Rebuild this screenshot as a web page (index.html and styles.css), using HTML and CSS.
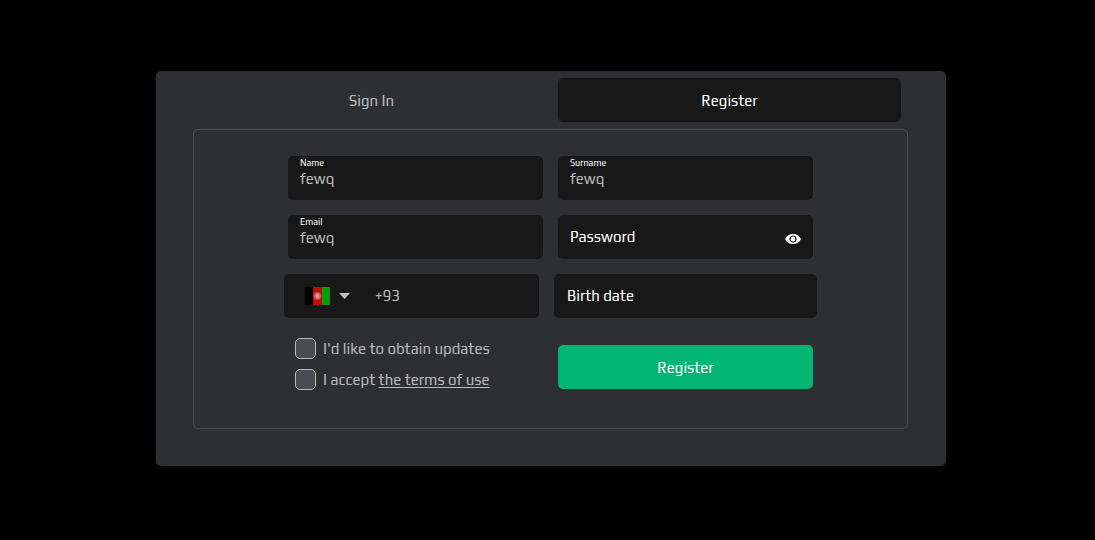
FILE: index.html
```html
<!DOCTYPE html>
<html lang="en">
<head>
<meta charset="utf-8">
<meta name="viewport" content="width=device-width, initial-scale=1">
<title>Register</title>
<link rel="stylesheet" href="styles.css">
</head>
<body>
<main class="card">
  <nav class="tabs">
    <button class="tab" type="button">Sign In</button>
    <button class="tab tab-active" type="button">Register</button>
  </nav>
  <section class="panel">
    <form class="form">
      <div class="row">
        <div class="field">
          <label class="field-label" for="name">Name</label>
          <input class="field-input" id="name" type="text" value="fewq">
        </div>
        <div class="field">
          <label class="field-label" for="surname">Surname</label>
          <input class="field-input" id="surname" type="text" value="fewq">
        </div>
      </div>
      <div class="row">
        <div class="field">
          <label class="field-label" for="email">Email</label>
          <input class="field-input" id="email" type="text" value="fewq">
        </div>
        <div class="field field-inline">
          <input class="field-input" type="password" placeholder="Password" aria-label="Password">
          <button class="reveal" type="button" aria-label="Show password">
            <svg class="eye" viewBox="0 0 16 10" width="16" height="10">
              <path fill="#fff" d="M8 0C4.300 0 1.300 2 0 5c1.300 3 4.300 5 8 5s6.700-2 8-5c-1.300-3-4.300-5-8-5z"/>
              <circle cx="8" cy="5" r="3" fill="#fff" stroke="#181818" stroke-width="1.200"/>
            </svg>
          </button>
        </div>
      </div>
      <div class="row row-wide">
        <div class="field field-inline phone">
          <button class="country" type="button" aria-label="Country code">
            <svg viewBox="0 0 25 18" width="25" height="18">
              <path fill="#000" d="M0 0h9v18H0z"/>
              <path fill="#bf0d0d" d="M8 0h9v18H8z"/>
              <path fill="#099a0c" d="M17 0h8v18h-8z"/>
              <circle cx="12.500" cy="9" r="3.500" fill="#d9686a" stroke="#cf5052" stroke-width="1"/>
              <path fill="#e59a9a" d="M11 7.500h3v3h-3z"/>
            </svg>
            <svg viewBox="0 0 11 6" width="11" height="6"><path fill="#bdbdbd" d="M0 0h11L5.500 6z"/></svg>
          </button>
          <input class="field-input" type="tel" value="+93" aria-label="Phone number">
        </div>
        <div class="field field-inline birth">
          <input class="field-input" type="text" placeholder="Birth date" aria-label="Birth date">
        </div>
      </div>
      <div class="row row-last">
        <div class="checks">
          <div class="check">
            <input class="box" id="updates" type="checkbox">
            <label for="updates">I'd like to obtain updates</label>
          </div>
          <div class="check">
            <input class="box" id="terms" type="checkbox">
            <label for="terms">I accept <a class="link" href="#">the terms of use</a></label>
          </div>
        </div>
        <button class="submit" type="submit">Register</button>
      </div>
    </form>
  </section>
</main>
</body>
</html>
```
FILE: styles.css
```css
* { box-sizing: border-box; }

body {
  margin: 0;
  padding: 71px 16px 71px 23px;
  background: #000;
  color: #b9babc;
  font: 15px/20px Play, Roboto, sans-serif;
}

button, input { font: inherit; color: inherit; }

button {
  padding: 0;
  border: 0;
  background: none;
  cursor: pointer;
}

.card {
  max-width: 790px;
  margin: 0 auto;
  padding: 0 38px 37px 37px;
  border-radius: 5px;
  background: #2e2f32;
}

.tabs {
  display: grid;
  grid-template-columns: 1fr 1fr;
  gap: 15px;
  padding: 7px;
}

.tab { height: 44px; padding-top: 2px; border-radius: 5px; }
.tab-active { background: #181818; color: #fff; }

.panel {
  padding: 26px 8px 38px;
  border: 1px solid #4b4c50;
  border-radius: 5px;
}

.form {
  display: flex;
  flex-direction: column;
  gap: 15px;
  max-width: 525px;
  margin: 0 auto;
}

.row {
  display: grid;
  grid-template-columns: 1fr 1fr;
  gap: 15px;
}

.row-wide {
  grid-template-columns: 255fr 263fr;
  margin: 0 -4px;
}

.row-last { margin-top: 5px; }

.field {
  display: flex;
  flex-direction: column;
  min-width: 0;
  height: 44px;
  padding: 1px 12px 0;
  border-radius: 5px;
  background: #181818;
}

.field-inline {
  flex-direction: row;
  align-items: center;
  padding-top: 0;
}

.field-label {
  color: #fff;
  font-size: 9px;
  line-height: 12px;
}

.field-input {
  flex: 1;
  width: 100%;
  min-width: 0;
  max-height: 20px;
  padding: 0;
  border: 0;
  outline: 0;
  background: none;
}

.field-input::placeholder { color: #fff; opacity: 1; }

.reveal { display: flex; padding-top: 4px; }

.phone { padding-left: 21px; gap: 25px; }
.birth { padding-left: 13px; }

.country {
  display: flex;
  align-items: center;
  gap: 9px;
}

.checks {
  display: flex;
  flex-direction: column;
  gap: 10px;
  padding-left: 7px;
}

.check {
  display: flex;
  align-items: center;
  gap: 7px;
}

.box {
  flex: none;
  appearance: none;
  width: 21px;
  height: 21px;
  margin: 0;
  border: 1px solid #b9babc;
  border-radius: 5px;
  background: #494c52;
}

.box:checked { background: #02b574; }

.link { color: inherit; text-underline-offset: 2px; }

.submit {
  height: 44px;
  margin-top: 7px;
  padding-top: 2px;
  border-radius: 5px;
  background: #02b574;
  color: #fff;
}

@media (max-width: 560px) {
  .row { grid-template-columns: 1fr; }
}
```
